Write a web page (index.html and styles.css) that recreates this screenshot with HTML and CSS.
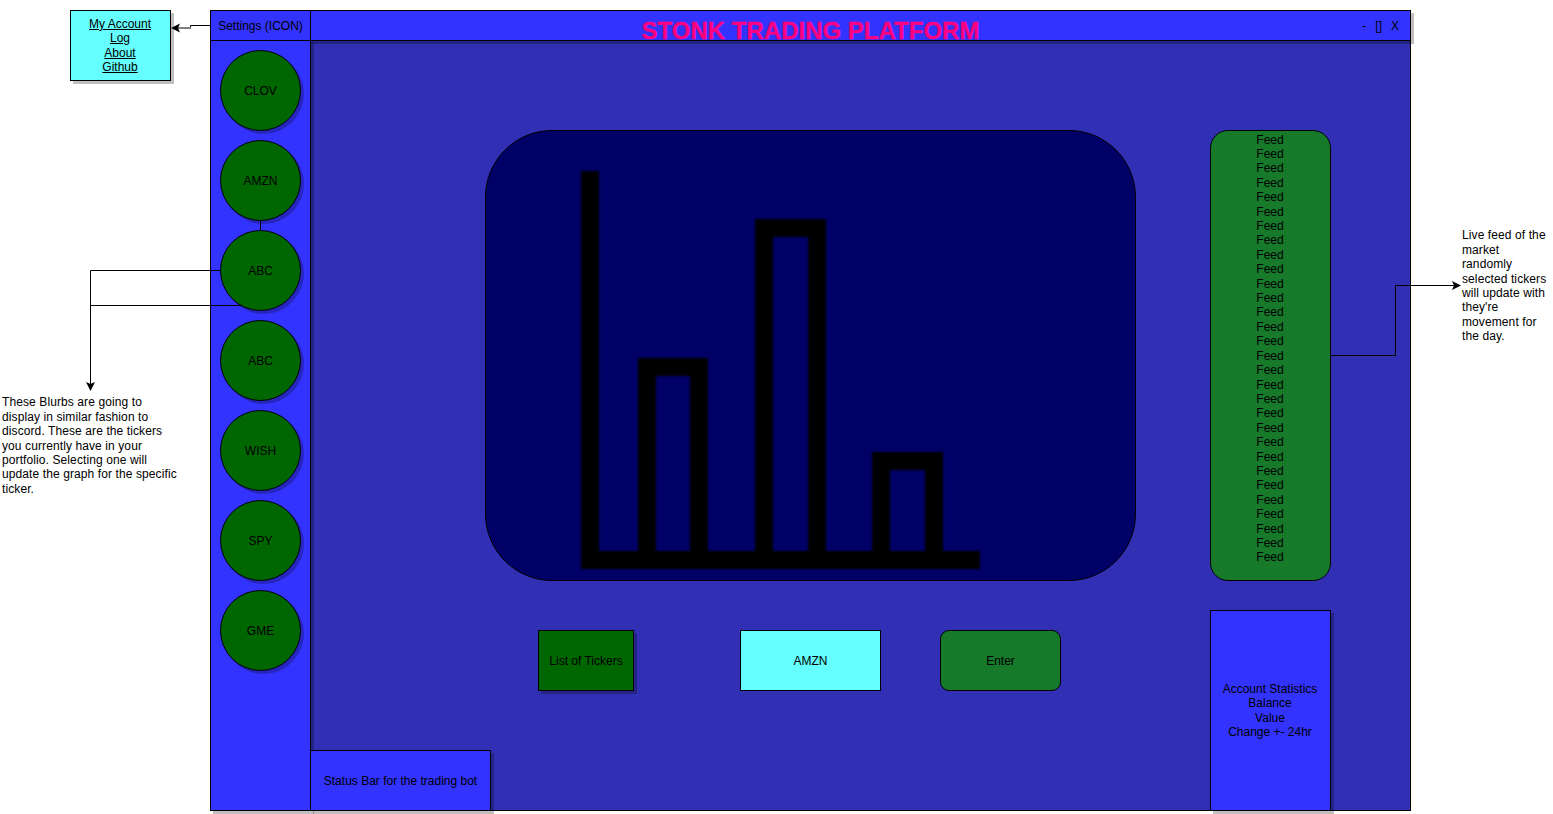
FILE: index.html
```html
<!DOCTYPE html>
<html lang="en">
<head>
    <meta charset="UTF-8">
    <meta name="viewport" content="width=device-width, initial-scale=1.0">
    <title>Stonk Trading Platform</title>
    <link rel="stylesheet" href="styles.css">
</head>
<body>
    <div class="canvas">
        <div class="menu-box node">
            <a href="#">My Account</a>
            <a href="#">Log</a>
            <a href="#">About</a>
            <a href="#">Github</a>
        </div>

        <p class="note note-left">These Blurbs are going to display in similar fashion to discord. These are the tickers you currently have in your portfolio. Selecting one will update the graph for the specific ticker.</p>
        <p class="note note-right">Live feed of the market randomly selected tickers will update with they're movement for the day.</p>

        <div class="window">
            <div class="settings">Settings (ICON)</div>
            <div class="titlebar">
                <h1>STONK TRADING PLATFORM</h1>
                <div class="controls"><span>-</span><span>[]</span><span>X</span></div>
            </div>

            <div class="sidebar">
                <div class="blurb">CLOV</div>
                <div class="blurb">AMZN</div>
                <div class="blurb">ABC</div>
                <div class="blurb">ABC</div>
                <div class="blurb">WISH</div>
                <div class="blurb">SPY</div>
                <div class="blurb">GME</div>
            </div>

            <div class="main">
                <div class="left-col">
                    <div class="chart">
                        <svg class="chart-icon" width="410" height="410" viewBox="0 0 410 410">
                            <path d="M20 10V399H410" />
                            <path d="M77 399V206H129V399" />
                            <path d="M194 399V67H247V399" />
                            <path d="M311 399V300H364V399" />
                        </svg>
                    </div>
                    <div class="ticker-row">
                        <div class="tickers">List of Tickers</div>
                        <div class="ticker-input">AMZN</div>
                        <div class="enter">Enter</div>
                    </div>
                </div>
                <div class="right-col">
                    <div class="feed" id="feed"></div>
                    <div class="stats">Account Statistics<br>Balance<br>Value<br>Change +- 24hr</div>
                </div>
                <div class="status">Status Bar for the trading bot</div>
            </div>
        </div>

        <svg class="wires" width="1553" height="814" viewBox="0 0 1553 814">
            <path class="wire" d="M210 25.5H190.5V27" />
            <path class="wire-shadow" d="M191 28H178" />
            <path class="tip" d="M171 28L180 23.5L178 28L180 32.5Z" />
            <path class="wire" d="M260.5 220V230" />
            <path class="wire" d="M220 270.5H90.5V384" />
            <path class="wire" d="M242 305.5H90.5" />
            <path class="tip" d="M90.5 391L86 382L90.5 384L95 382Z" />
            <path class="wire" d="M1331 355.5H1395.5V285.5H1454" />
            <path class="tip" d="M1461 285.5L1452 290L1454 285.5L1452 281Z" />
        </svg>
    </div>

    <script>
        var feed = document.getElementById('feed');
        for (var i = 0; i < 30; i++) {
            var line = document.createElement('div');
            line.textContent = 'Feed';
            feed.appendChild(line);
        }
    </script>
</body>
</html>
```

FILE: styles.css
```css
body {
    margin: 0;
    background-color: #fff;
    font-family: "Liberation Sans", Arial, sans-serif;
    font-size: 12px;
    line-height: 14.4px;
    color: #000;
    overflow: hidden;
}
.canvas {
    position: relative;
    width: 1553px;
    height: 814px;
    overflow: hidden;
}
.menu-box {
    position: absolute;
    left: 70px;
    top: 10px;
    width: 101px;
    height: 71px;
    box-sizing: border-box;
    border: 1px solid #000;
    padding-right: 1px;
    background-color: #66ffff;
    box-shadow: 3px 3px 0 rgba(0, 0, 0, 0.25);
    display: flex;
    flex-direction: column;
    align-items: center;
    justify-content: center;
}
.menu-box a {
    color: #000;
}
.note {
    position: absolute;
    margin: 0;
    letter-spacing: 0.1px;
}
.note-left {
    left: 2px;
    top: 395.4px;
    width: 178px;
}
.note-right {
    left: 1462px;
    top: 228.4px;
    width: 88px;
}
.window {
    position: absolute;
    left: 210px;
    top: 10px;
    width: 1201px;
    height: 801px;
    background-color: #3130b5;
    box-shadow: inset 0 0 0 1px #000;
    display: grid;
    grid-template-columns: 101px 1fr;
    grid-template-rows: 31px 1fr;
}
.settings {
    box-sizing: border-box;
    border: 1px solid #000;
    padding-top: 1px;
    background-color: #3333ff;
    display: flex;
    align-items: center;
    justify-content: center;
    box-shadow: 3px 3px 0 rgba(0, 0, 0, 0.25);
}
.titlebar {
    position: relative;
    box-sizing: border-box;
    margin-left: -1px;
    border: 1px solid #000;
    padding-top: 1px;
    background-color: #3333ff;
    box-shadow: 3px 3px 0 rgba(0, 0, 0, 0.25);
    display: flex;
    justify-content: flex-end;
    align-items: center;
}
.titlebar h1 {
    position: absolute;
    left: 0;
    right: 100px;
    top: 5px;
    margin: 0;
    text-align: center;
    font-size: 24px;
    line-height: 29px;
    color: #ff0080;
    -webkit-text-stroke: 0.3px #ff0080;
}
.controls {
    display: flex;
    gap: 9px;
    padding-right: 11px;
}
.sidebar {
    box-sizing: border-box;
    margin-top: -1px;
    border: 1px solid #000;
    background-color: #3333ff;
    box-shadow: 3px 3px 0 rgba(0, 0, 0, 0.25);
    padding: 9px;
    display: flex;
    flex-direction: column;
    gap: 9px;
}
.blurb {
    box-sizing: border-box;
    width: 81px;
    height: 81px;
    flex: none;
    border: 1px solid #000;
    border-radius: 50%;
    padding-top: 1px;
    background-color: #006600;
    box-shadow: 3px 3px 0 rgba(0, 0, 0, 0.25);
    display: flex;
    align-items: center;
    justify-content: center;
}
.main {
    position: relative;
    box-sizing: border-box;
    padding: 89px 0 0 174px;
    display: flex;
    gap: 74px;
}
.left-col {
    width: 651px;
}
.chart {
    box-sizing: border-box;
    width: 651px;
    height: 451px;
    border: 1px solid #000;
    border-radius: 67px;
    background-color: #000066;
    padding: 30px 0 0 84px;
}
.chart-icon {
    display: block;
    fill: none;
    stroke: #000;
    stroke-width: 18;
    filter: blur(1px);
}
.ticker-row {
    display: flex;
    margin: 49px 0 0 53px;
}
.ticker-row > div {
    box-sizing: border-box;
    height: 61px;
    border: 1px solid #000;
    padding-top: 1px;
    display: flex;
    align-items: center;
    justify-content: center;
}
.tickers {
    width: 96px;
    background-color: #006600;
    box-shadow: 3px 3px 0 rgba(0, 0, 0, 0.25);
}
.ticker-input {
    width: 141px;
    margin-left: 106px;
    background-color: #66ffff;
}
.enter {
    width: 121px;
    margin-left: 59px;
    border-radius: 9px;
    background-color: #167a2a;
}
.right-col {
    width: 121px;
}
.feed {
    box-sizing: border-box;
    height: 451px;
    border: 1px solid #000;
    border-radius: 18px;
    background-color: #167a2a;
    padding: 1.6px 1px 0 0;
    text-align: center;
}
.stats {
    box-sizing: border-box;
    height: 201px;
    margin-top: 29px;
    border: 1px solid #000;
    padding-right: 1px;
    background-color: #3333ff;
    box-shadow: 3px 3px 0 rgba(0, 0, 0, 0.25);
    display: flex;
    align-items: center;
    justify-content: center;
    text-align: center;
}
.status {
    position: absolute;
    left: -1px;
    bottom: 0;
    box-sizing: border-box;
    width: 181px;
    height: 61px;
    border: 1px solid #000;
    padding-top: 1px;
    background-color: #3333ff;
    box-shadow: 3px 3px 0 rgba(0, 0, 0, 0.25);
    display: flex;
    align-items: center;
    justify-content: center;
}
.wires {
    position: absolute;
    left: 0;
    top: 0;
    pointer-events: none;
}
.wire {
    fill: none;
    stroke: #000;
    stroke-width: 1;
}
.wire-shadow {
    fill: none;
    stroke: #808080;
    stroke-width: 2;
}
.tip {
    fill: #000;
}
```
